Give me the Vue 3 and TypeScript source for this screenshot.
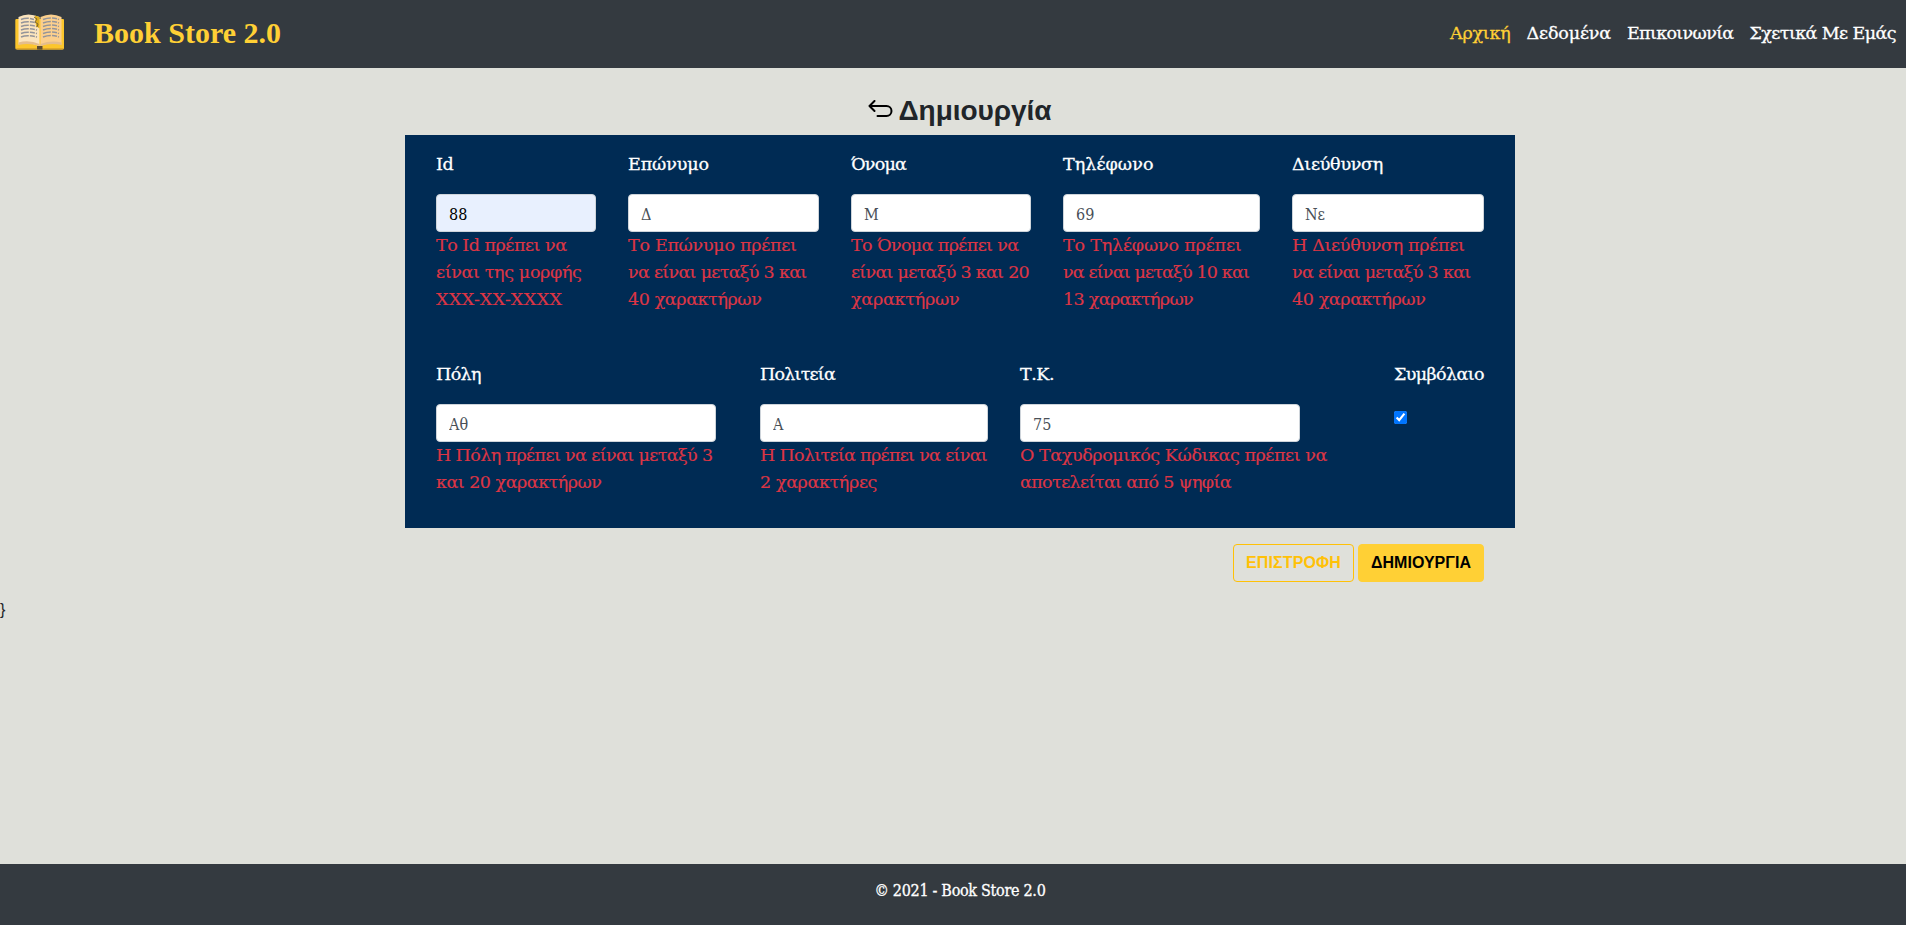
<script setup lang="ts">
import type { Directive } from 'vue'

interface Line { text: string; width: number }
interface Field {
  id: string
  label: Line
  value: string
  size: string
  filled?: boolean
  errors: Line[]
}

// Tracks a single line of text out to its set measure.
const vFit: Directive<HTMLElement, number> = {
  mounted(el, { value }) {
    const natural = el.getBoundingClientRect().width
    const count = Array.from(el.textContent ?? '').length
    el.style.letterSpacing = `${(value - natural) / count}px`
  },
}

const nav: Line[] = [
  { text: 'Αρχική', width: 60.5 },
  { text: 'Δεδομένα', width: 84.5 },
  { text: 'Επικοινωνία', width: 106.5 },
  { text: 'Σχετικά Με Εμάς', width: 146.5 },
]

const l = (text: string, width: number): Line => ({ text, width })

const firstRow: Field[] = [
  { id: 'id', label: l('Id', 17.5), value: '88', size: 'w160', filled: true,
    errors: [l('Το Id πρέπει να', 130.5), l('είναι της μορφής', 145.5), l('XXX-XX-XXXX', 126.5)] },
  { id: 'surname', label: l('Επώνυμο', 81), value: 'Δ', size: 'w191',
    errors: [l('Το Επώνυμο πρέπει', 168.5), l('να είναι μεταξύ 3 και', 178.5), l('40 χαρακτήρων', 133.5)] },
  { id: 'name', label: l('Όνομα', 55), value: 'Μ', size: 'w180',
    errors: [l('Το Όνομα πρέπει να', 167.5), l('είναι μεταξύ 3 και 20', 178), l('χαρακτήρων', 108.5)] },
  { id: 'phone', label: l('Τηλέφωνο', 90.5), value: '69', size: 'w197',
    errors: [l('Το Τηλέφωνο πρέπει', 178.5), l('να είναι μεταξύ 10 και', 186), l('13 χαρακτήρων', 130)] },
  { id: 'address', label: l('Διεύθυνση', 91), value: 'Νε', size: 'w192',
    errors: [l('Η Διεύθυνση πρέπει', 172.5), l('να είναι μεταξύ 3 και', 178.5), l('40 χαρακτήρων', 133.5)] },
]

const secondRow: Field[] = [
  { id: 'city', label: l('Πόλη', 45), value: 'Αθ', size: 'w292',
    errors: [l('Η Πόλη πρέπει να είναι μεταξύ 3', 276.5), l('και 20 χαρακτήρων', 165.5)] },
  { id: 'state', label: l('Πολιτεία', 75), value: 'Α', size: 'w228',
    errors: [l('Η Πολιτεία πρέπει να είναι', 227), l('2 χαρακτήρες', 117)] },
  { id: 'zip', label: l('Τ.Κ.', 34), value: '75', size: 'w342',
    errors: [l('Ο Ταχυδρομικός Κώδικας πρέπει να', 307), l('αποτελείται από 5 ψηφία', 211)] },
]

const rows = [firstRow, secondRow]
</script>

<template>
  <div class="page">
    <header class="bar">
      <a class="brand">
        <svg class="book" viewBox="0 0 50 36">
          <path fill="#fcc62c" d="M1.500 5H48a1 1 0 0 1 1 1v28q0 1.500-1.500 1.500H2Q.3 35.500.3 34V6q0-1 1.200-1z" />
          <path fill="#e0a82a" d="M1 34h22.500v1.500H2zM27 34h21.700q-.4 1.500-1.700 1.500H27z" />
          <path fill="#5b4c32" d="M22 32h5.500v3.500H22z" />
          <path fill="#fbe4bd" d="M3.500 3Q13-2 24.500 3v29Q13 27.500 3.500 30.500z" />
          <path fill="#fbcf8d" d="M25.500 3Q36-2 46.500 3v27.500Q36 27.500 25.500 32z" />
          <path fill="#e4bd8d" d="M3.500 28.500Q14 25.500 24.500 30v2Q14 28.500 3.500 31zM25.500 30Q36 26 46.500 28.500V31Q36 28.500 25.500 32z" />
          <path fill="none" stroke="#93949a" stroke-width="1.500" stroke-dasharray="8 1.200 5 1"
            d="M6 5.500q6-2.500 13 0M6 9q6-2.500 16 0M6 12.500q6-2.500 16 0M6 16q6-2.500 16 0M6 19.500q6-2.500 16 0M6 23q6-2.500 16 0M28 5.500q8-3 16 0M28 9q8-3 16 0M28 12.500q8-3 16 0M28 16q8-3 16 0M28 19.500q8-3 16 0M28 23q8-3 16 0" />
          <path fill="#e0ae1c" d="M20 1.500l4.500 1.500v11.500L21 12z" />
          <path fill="none" stroke="#80682c" stroke-width="1" d="M19 3l3 2-2 3 3 2-1 3" />
        </svg>
        <span v-fit="187" class="brand-name">Book Store 2.0</span>
      </a>
      <nav class="nav">
        <a v-for="(item, i) in nav" :key="item.text" :class="{ active: i === 0 }"><span v-fit="item.width" class="fit">{{ item.text }}</span></a>
      </nav>
    </header>

    <main>
      <h1 class="title">
        <svg class="back" viewBox="0 0 24 18" fill="none" stroke="#000" stroke-width="2" stroke-linecap="round" stroke-linejoin="round">
          <path d="M6 1 1 6l5 5M1.500 6H18a5 5 0 0 1 0 10H9" />
        </svg>
        <span v-fit="153" class="fit">Δημιουργία</span>
      </h1>

      <form class="panel" @submit.prevent>
        <div v-for="(row, r) in rows" :key="r" class="row">
          <div v-for="f in row" :key="f.id" class="field" :class="f.size">
            <label :for="f.id"><span v-fit="f.label.width" class="fit">{{ f.label.text }}</span></label>
            <input :id="f.id" class="control" :class="{ filled: f.filled }" type="text" :value="f.value">
            <div v-for="(e, i) in f.errors" :key="i" class="error"><span v-fit="e.width" class="fit">{{ e.text }}</span></div>
          </div>
          <div v-if="r === 1" class="field contract">
            <label for="contract"><span v-fit="90" class="fit">Συμβόλαιο</span></label>
            <input id="contract" class="check" type="checkbox" checked>
          </div>
        </div>
      </form>

      <div class="actions">
        <button class="btn outline" type="button"><span v-fit="95" class="fit">ΕΠΙΣΤΡΟΦΗ</span></button>
        <button class="btn solid" type="button"><span v-fit="100" class="fit">ΔΗΜΙΟΥΡΓΙΑ</span></button>
      </div>
      <p class="stray">}</p>
    </main>

    <footer class="footer"><span v-fit="171" class="fit">© 2021 - Book Store 2.0</span></footer>
  </div>
</template>

<style>
body { margin: 0; overflow: hidden; }
</style>

<style scoped>
* { box-sizing: border-box; }
.page {
  display: flex;
  flex-direction: column;
  height: 925px;
  background: #dfe0da;
  color: #212529;
  font: 16px/24px "Roboto Slab", "DejaVu Serif", serif;
}
.fit { display: inline-block; white-space: nowrap; }
.bar {
  display: flex;
  align-items: center;
  justify-content: space-between;
  height: 68px;
  padding: 0 10px 0 15px;
  background: #343a40;
}
.brand { display: flex; align-items: center; gap: 29px; }
.book { width: 50px; height: 36px; margin-top: -4px; }
.brand-name {
  display: inline-block;
  white-space: nowrap;
  color: #ffd035;
  font: bold 30px/40px "Liberation Serif", serif;
  margin-top: -3px;
}
.nav {
  display: flex;
  gap: 16px;
  margin-top: -2px;
  color: #fff;
  font-size: 17.500px;
  line-height: 27px;
  -webkit-text-stroke: 0.3px;
}
.nav .active { color: #ffd035; }
main { flex: 1; }
.title {
  display: flex;
  justify-content: center;
  align-items: center;
  gap: 6px;
  height: 34px;
  margin: 26px 0 7px;
  padding-left: 13px;
  font: bold 28px/34px "Liberation Sans", sans-serif;
}
.back { width: 25px; height: 18px; margin-top: -4px; }
.panel {
  width: 1110px;
  height: 393px;
  margin: 0 0 0 405px;
  padding: 16px 31px 32px;
  background: #002b54;
  color: #fff;
  font-size: 17.500px;
  line-height: 27px;
}
.row { display: flex; gap: 32px; }
.row + .row { margin-top: 48px; }
.field { display: flex; flex-direction: column; }
.w160 { width: 160px; }
.w191 { width: 191px; }
.w180 { width: 180px; }
.w197 { width: 197px; }
.w192 { width: 192px; }
.w292 { width: 292px; }
.w228 { width: 228px; }
.w342 { width: 342px; }
label { height: 27px; margin-bottom: 16px; -webkit-text-stroke: 0.3px; }
.control {
  width: 100%;
  max-width: 280px;
  height: 38px;
  padding: 7px 12px 5px;
  border: 1px solid #ced4da;
  border-radius: 4px;
  background: #fff;
  color: #495057;
  font: 16px/24px "Roboto Slab", "DejaVu Serif Condensed", "DejaVu Serif", serif;
  font-stretch: condensed;
}
.control.filled { background: #e8f0fe; color: #000; }
.error { height: 27px; color: #dc3545; -webkit-text-stroke: 0.2px; }
.contract { margin-left: auto; }
.check { width: 13px; height: 13px; margin: 7px 0 0; accent-color: #0075ff; }
.actions {
  display: flex;
  justify-content: flex-end;
  gap: 4px;
  width: 1079px;
  margin: 16px 0 0 405px;
}
.btn {
  height: 38px;
  padding: 0 12px;
  border: 1px solid #ffc107;
  border-radius: 4px;
  background: transparent;
  color: #ffc107;
  font: bold 16px/24px "Liberation Sans", sans-serif;
}
.btn.outline { width: 121px; }
.btn.solid { width: 126px; border-color: #ffd035; background: #ffd035; color: #000; }
.stray { margin: 16px 0 0; font: 16px/24px "Liberation Sans", sans-serif; }
.footer {
  height: 61px;
  padding-top: 15px;
  padding-left: 14px;
  background: #343a40;
  color: #fff;
  font-stretch: condensed;
  font-family: "Roboto Slab", "DejaVu Serif Condensed", "DejaVu Serif", serif;
  -webkit-text-stroke: 0.3px;
  text-align: center;
}
</style>
